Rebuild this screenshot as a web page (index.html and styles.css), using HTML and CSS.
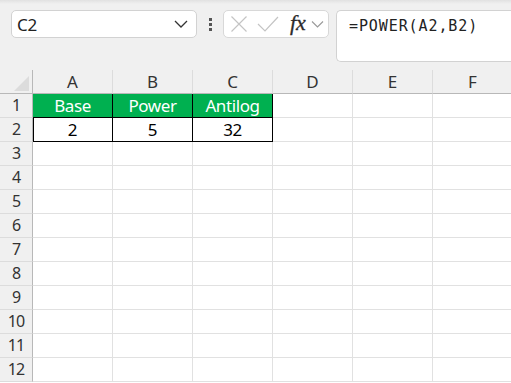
FILE: index.html
```html
<!DOCTYPE html>
<html lang="en">
<head>
    <meta charset="UTF-8">
    <meta name="viewport" content="width=device-width, initial-scale=1.0">
    <title>POWER</title>
    <link rel="stylesheet" href="styles.css">
</head>
<body>

    <div class="toolbar">
        <div class="namebox">
            <span>C2</span>
            <svg width="14" height="8" viewBox="0 0 14 8"><path d="M1 1 L7 7 L13 1" fill="none" stroke="#333" stroke-width="1.3"/></svg>
        </div>
        <div class="dots"><i></i><i></i><i></i></div>
        <div class="fxbox">
            <svg width="18" height="18" viewBox="0 0 18 18"><path d="M1.5 1.5 L16.5 16.5 M16.5 1.5 L1.5 16.5" stroke="#c4c4c4" stroke-width="1.2"/></svg>
            <svg width="22" height="18" viewBox="0 0 22 18"><path d="M1 9 L8 16 L21 2" fill="none" stroke="#c4c4c4" stroke-width="1.2"/></svg>
            <span class="fx">fx</span>
            <svg width="13" height="8" viewBox="0 0 13 8"><path d="M1 1.5 L6.5 7 L12 1.5" fill="none" stroke="#999" stroke-width="1.1"/></svg>
        </div>
        <div class="formula">=POWER(A2,B2)</div>
    </div>

    <div class="sheet">
        <div class="corner"><svg width="33" height="24" viewBox="0 0 33 24"><polygon points="29,6 29,21 14,21" fill="#dcdcdc"/></svg></div>
        <div class="colhead">A</div><div class="colhead">B</div><div class="colhead">C</div>
        <div class="colhead">D</div><div class="colhead">E</div><div class="colhead">F</div>

        <div class="rowhead">1</div>
        <div class="cell head first">Base</div><div class="cell head">Power</div><div class="cell head">Antilog</div>
        <div class="cell"></div><div class="cell"></div><div class="cell"></div>

        <div class="rowhead">2</div>
        <div class="cell data first">2</div><div class="cell data">5</div><div class="cell data">32</div>
        <div class="cell"></div><div class="cell"></div><div class="cell"></div>

        <div class="rowhead">3</div><div class="cell"></div><div class="cell"></div><div class="cell"></div><div class="cell"></div><div class="cell"></div><div class="cell"></div>
        <div class="rowhead">4</div><div class="cell"></div><div class="cell"></div><div class="cell"></div><div class="cell"></div><div class="cell"></div><div class="cell"></div>
        <div class="rowhead">5</div><div class="cell"></div><div class="cell"></div><div class="cell"></div><div class="cell"></div><div class="cell"></div><div class="cell"></div>
        <div class="rowhead">6</div><div class="cell"></div><div class="cell"></div><div class="cell"></div><div class="cell"></div><div class="cell"></div><div class="cell"></div>
        <div class="rowhead">7</div><div class="cell"></div><div class="cell"></div><div class="cell"></div><div class="cell"></div><div class="cell"></div><div class="cell"></div>
        <div class="rowhead">8</div><div class="cell"></div><div class="cell"></div><div class="cell"></div><div class="cell"></div><div class="cell"></div><div class="cell"></div>
        <div class="rowhead">9</div><div class="cell"></div><div class="cell"></div><div class="cell"></div><div class="cell"></div><div class="cell"></div><div class="cell"></div>
        <div class="rowhead">10</div><div class="cell"></div><div class="cell"></div><div class="cell"></div><div class="cell"></div><div class="cell"></div><div class="cell"></div>
        <div class="rowhead">11</div><div class="cell"></div><div class="cell"></div><div class="cell"></div><div class="cell"></div><div class="cell"></div><div class="cell"></div>
        <div class="rowhead">12</div><div class="cell"></div><div class="cell"></div><div class="cell"></div><div class="cell"></div><div class="cell"></div><div class="cell"></div>
    </div>

</body>
</html>
```

FILE: styles.css
```css
* {
    margin: 0;
    padding: 0;
    box-sizing: border-box;
}

body {
    font-family: 'Noto Sans', 'Open Sans', sans-serif;
    background-color: #fff;
    width: 511px;
    height: 383px;
    overflow: hidden;
}

/* Formula bar area */
.toolbar {
    height: 70px;
    display: flex;
    align-items: flex-start;
    padding: 10px 0 0 11px;
    background: linear-gradient(#e1e1e1, #f0f0f0 4px);
}

.namebox {
    width: 186px;
    height: 28px;
    background-color: #fff;
    border: 1px solid #d2d2d2;
    border-radius: 5px;
    display: flex;
    align-items: center;
    justify-content: space-between;
    padding: 0 8px 0 5px;
    font-size: 17px;
    letter-spacing: -0.3px;
    color: #222;
}

.dots {
    width: 26px;
    height: 28px;
    display: flex;
    flex-direction: column;
    align-items: center;
    justify-content: center;
    gap: 2px;
}

.dots i {
    width: 3px;
    height: 3px;
    background-color: #555;
}

.fxbox {
    width: 106px;
    height: 28px;
    background-color: #fff;
    border: 1px solid #d8d8d8;
    border-radius: 5px;
    display: flex;
    align-items: center;
    padding-left: 6px;
}

.fxbox svg:nth-child(2) {
    margin-left: 9px;
}

.fx {
    font-family: 'Liberation Serif', serif;
    font-style: italic;
    font-size: 22px;
    color: #2b2b2b;
    margin-left: 11px;
    margin-top: -3px;
    -webkit-text-stroke: 0.3px #2b2b2b;
}

.fxbox svg:last-child {
    margin-left: 5px;
}

.formula {
    margin-left: 7px;
    flex: 1;
    height: 52px;
    background-color: #fff;
    border: 1px solid #d2d2d2;
    border-right: none;
    border-radius: 5px 0 0 5px;
    font-family: 'DejaVu Sans Mono', monospace;
    font-size: 15px;
    line-height: 20px;
    letter-spacing: 0.9px;
    color: #222;
    padding: 5px 0 0 12px;
}

/* Grid */
.sheet {
    display: grid;
    grid-template-columns: 33px repeat(6, 80px);
    grid-auto-rows: 24px;
}

.corner {
    background-color: #f0f0f0;
    border-right: 1px solid #b8b8b8;
    border-bottom: 1px solid #b8b8b8;
}

.corner svg {
    display: block;
}

.colhead {
    background-color: #f0f0f0;
    border-right: 1px solid #dcdcdc;
    border-bottom: 1px solid #b8b8b8;
    font-size: 17px;
    color: #333;
    text-align: center;
    line-height: 23px;
}

.rowhead {
    background-color: #f0f0f0;
    border-right: 1px solid #b8b8b8;
    border-bottom: 1px solid #dcdcdc;
    font-size: 16px;
    letter-spacing: -1px;
    color: #333;
    text-align: center;
    line-height: 23px;
}

.cell {
    border-right: 1px solid #e1e1e1;
    border-bottom: 1px solid #e1e1e1;
    font-size: 17px;
    letter-spacing: -0.4px;
    text-align: center;
    line-height: 23px;
    color: #000;
}

.cell.head {
    background-color: #00b050;
    color: #fff;
    border-right-color: #000;
    border-bottom-color: #000;
}

.cell.data {
    border-right-color: #000;
    border-bottom-color: #000;
}

.cell.data.first {
    box-shadow: inset 1px 0 0 #000;
}
```
